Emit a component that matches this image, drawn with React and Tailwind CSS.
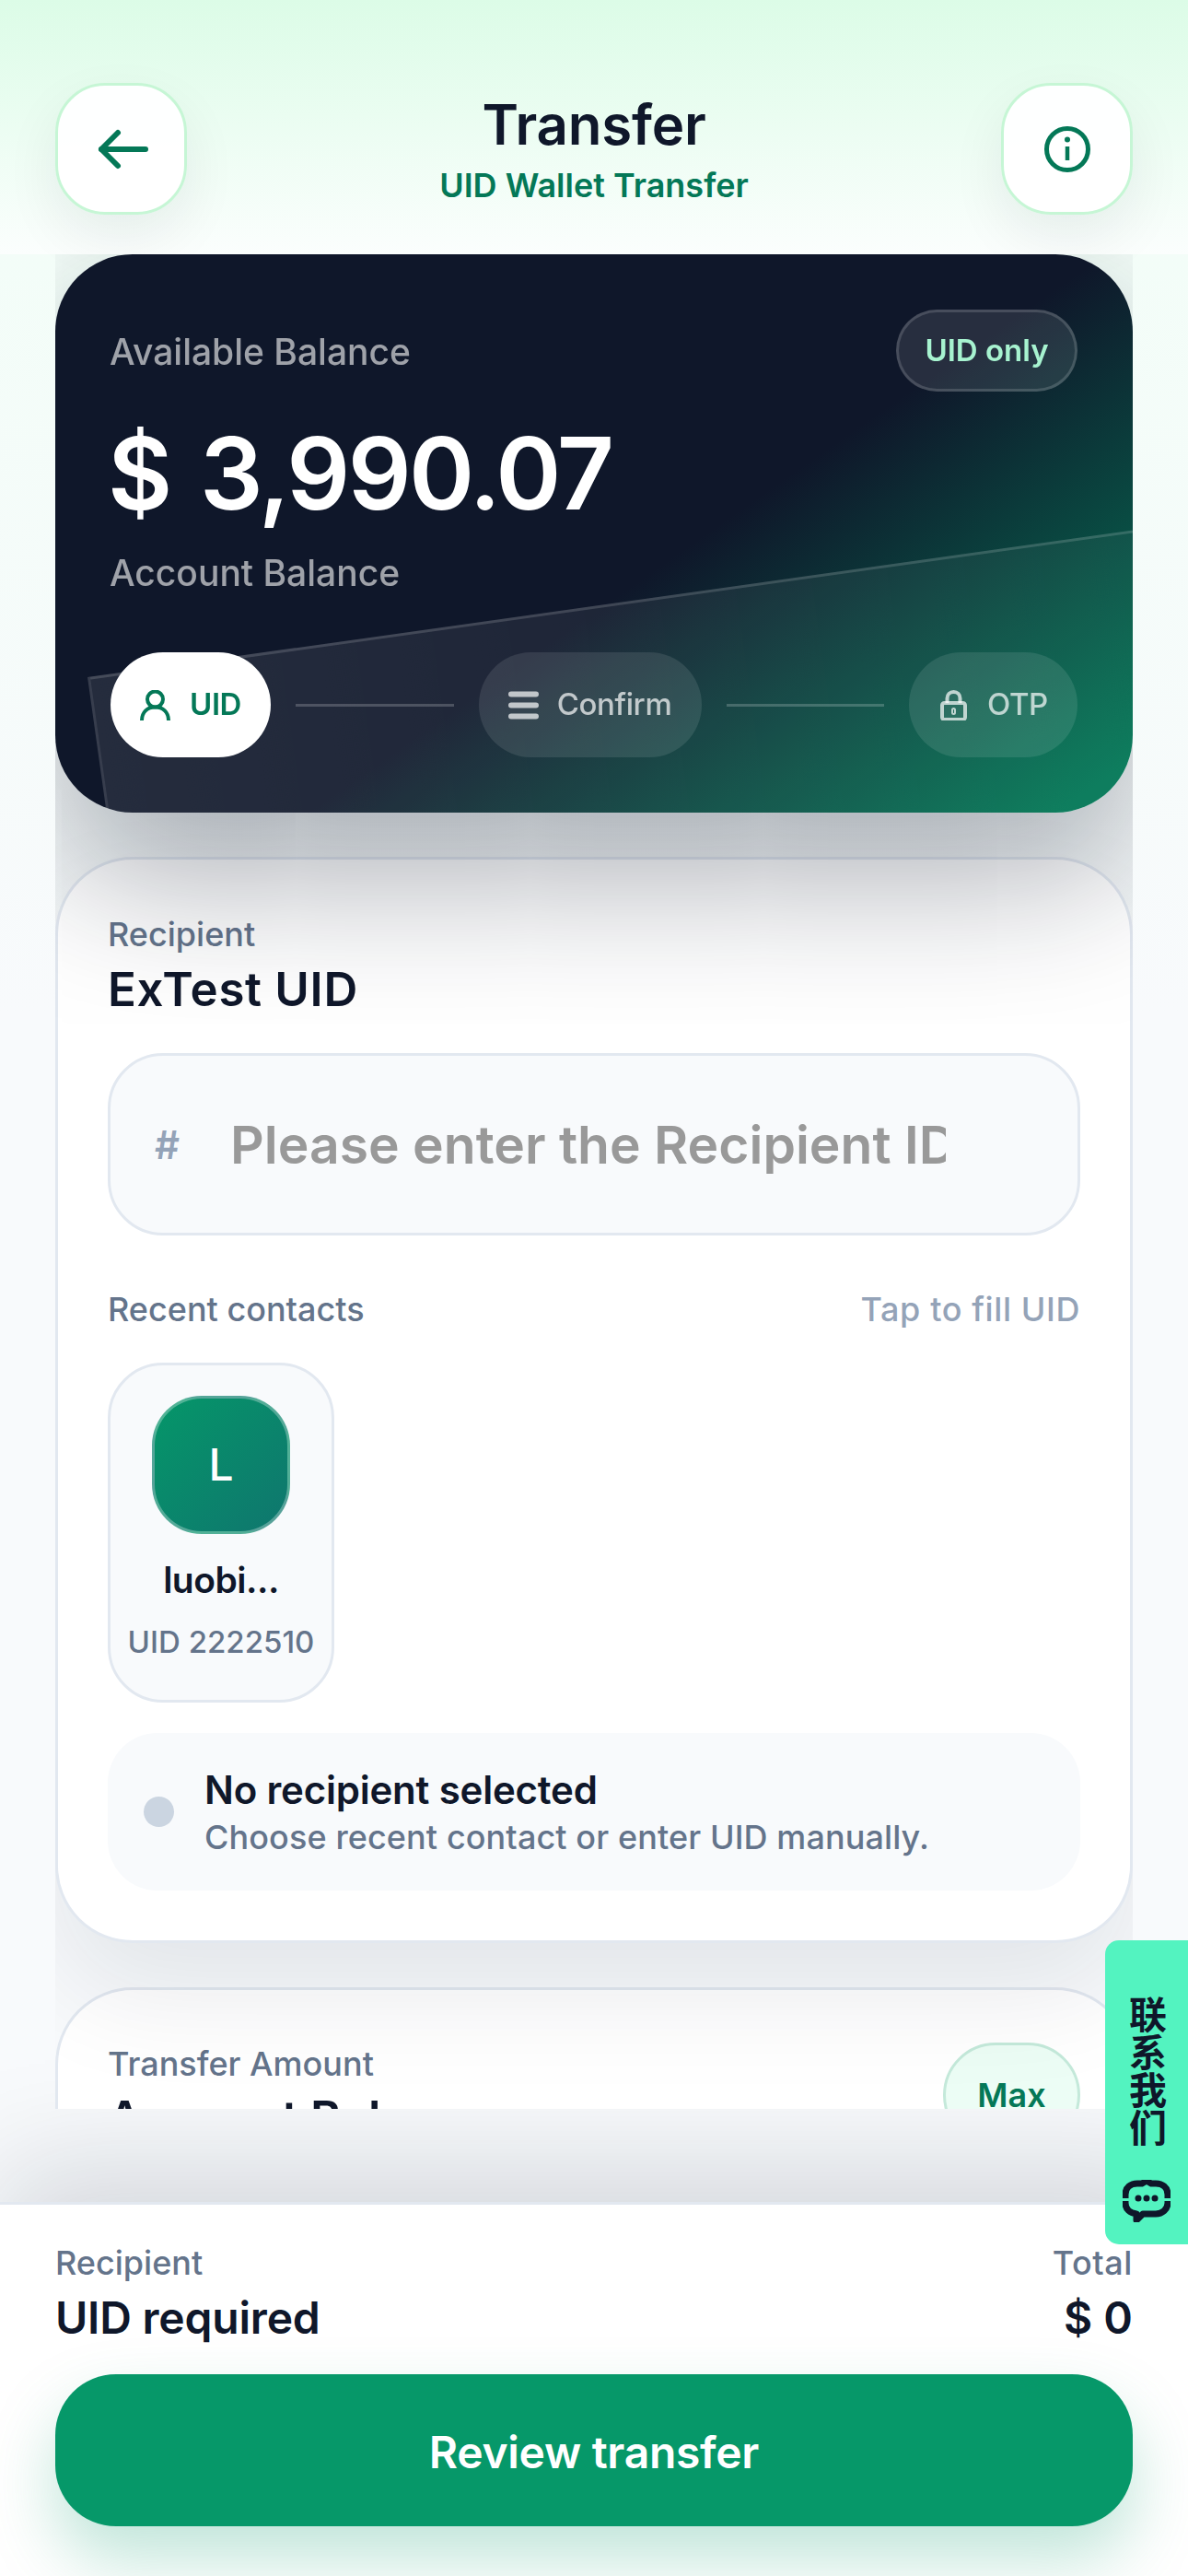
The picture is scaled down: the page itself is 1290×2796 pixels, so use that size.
export default function App() {
  return (
    <div className="relative w-[1290px] h-[2796px] overflow-hidden flex flex-col bg-[linear-gradient(180deg,#f3fdf8_0px,#f3fdf8_276px,#f8fafc_1100px)] font-['Inter',sans-serif] text-[#0f172a]">
      <header className="h-[276px] shrink-0 px-[60px] pt-[90px] flex justify-between items-start bg-[linear-gradient(180deg,#dcfce7_0%,#fbfefd_100%)]">
        <button className="w-[143px] h-[143px] rounded-[54px] border-[3px] border-[#c6f6d5] bg-white/95 flex items-center justify-center shadow-[0_24px_60px_rgba(15,23,42,0.07)]">
          <svg width="60" height="48" viewBox="0 0 60 48" fill="none" stroke="#047857" strokeWidth="6" strokeLinecap="round" strokeLinejoin="round">
            <path d="M26 6 L8 24 L26 42" />
            <path d="M8 24 H56" />
          </svg>
        </button>
        <div className="flex flex-col items-center">
          <div className="text-[60px] leading-[90px] font-semibold tracking-[-0.2px]">Transfer</div>
          <div className="-mt-[3px] text-[36px] leading-[48px] font-semibold text-[#047857]">UID Wallet Transfer</div>
        </div>
        <button className="w-[143px] h-[143px] rounded-[54px] border-[3px] border-[#c6f6d5] bg-white/95 flex items-center justify-center shadow-[0_24px_60px_rgba(15,23,42,0.07)]">
          <svg width="54" height="54" viewBox="0 0 54 54" fill="none" stroke="#047857" strokeWidth="5">
            <circle cx="27" cy="27" r="22.5" />
            <path d="M27 24 V39" strokeWidth="4.5" />
            <circle cx="27" cy="16.5" r="3" fill="#047857" stroke="none" />
          </svg>
        </button>
      </header>

      <main className="relative z-10 mx-[60px] h-[2013px] shrink-0 overflow-hidden">
        <section className="relative z-30 h-[606px] rounded-[84px] shadow-[0_66px_165px_rgba(15,23,42,0.36)] [will-change:transform]">
          <div className="relative h-full rounded-[84px] overflow-hidden px-[60px] pt-[60px] pb-[60px] bg-[linear-gradient(145deg,#0f172a_56%,#047857_96%)]">
            <div className="absolute left-[35px] top-[459px] w-[1500px] h-[500px] origin-top-left -rotate-[8deg] border-t-[3px] border-l-[3px] border-white/15 bg-[linear-gradient(90deg,rgba(255,255,255,0.09),rgba(255,255,255,0.02))]" />
            <div className="relative flex items-center justify-between h-[89px]">
              <span className="mt-[4px] -ml-[1px] text-[39px] font-medium text-white/60">Available Balance</span>
              <span className="h-[89px] w-[197px] rounded-full border-[3px] border-white/15 bg-white/10 flex items-center justify-center text-[33px] font-semibold text-[#a7f3d0]">UID only</span>
            </div>
            <div className="relative mt-[35px] -ml-[3px] text-[108px] leading-[108px] font-semibold tracking-[-0.025em] [word-spacing:8px] text-white">$ 3,990.07</div>
            <div className="relative mt-[30px] -ml-[1px] text-[39px] leading-[48px] font-medium text-white/60">Account Balance</div>
            <div className="relative mt-[62px] flex items-center gap-[27px]">
              <div className="w-[174px] h-[114px] rounded-full bg-white flex items-center justify-center gap-[21px] text-[33px] font-semibold tracking-[-0.5px] text-[#047857] shrink-0">
                <svg width="33" height="33" viewBox="0 0 33 33" fill="none" stroke="#047857" strokeWidth="4">
                  <circle cx="16.5" cy="10" r="8.5" />
                  <path d="M2 33 C2 24 8 18.5 16.5 18.5 C25 18.5 31 24 31 33" />
                </svg>
                UID
              </div>
              <div className="flex-1 h-[3px] bg-white/20" />
              <div className="w-[242px] h-[114px] rounded-full bg-white/10 flex items-center justify-center gap-[20px] text-[33px] font-medium tracking-[-0.4px] text-white/70 shrink-0">
                <svg width="33" height="33" viewBox="0 0 33 33" fill="none" stroke="rgba(255,255,255,0.7)" strokeWidth="6" strokeLinecap="round">
                  <path d="M3 4.5 H30 M3 16.5 H30 M3 28.5 H30" />
                </svg>
                Confirm
              </div>
              <div className="flex-1 h-[3px] bg-white/20" />
              <div className="w-[183px] h-[114px] rounded-full bg-white/10 flex items-center justify-center gap-[20px] text-[33px] font-medium tracking-[-0.4px] text-white/70 shrink-0">
                <svg width="33" height="33" viewBox="0 0 33 33" fill="none" stroke="rgba(255,255,255,0.7)" strokeWidth="4">
                  <rect x="4" y="14" width="25" height="18" rx="2.5" />
                  <path d="M9.5 14 V9 C9.5 5 12.5 2 16.5 2 C20.5 2 23.5 5 23.5 9 V14" />
                  <rect x="15" y="20" width="3" height="6" rx="1.5" strokeWidth="2" />
                </svg>
                OTP
              </div>
            </div>
          </div>
        </section>

        <section className="relative z-20 mt-[48px] rounded-[84px] border-[3px] border-[#e2e8f0] bg-white px-[54px] pt-[56px] pb-[54px] shadow-[0_54px_120px_rgba(15,23,42,0.09)]">
          <div className="text-[36px] leading-[50px] font-medium text-[#64748b]">Recipient</div>
          <div className="mt-[5px] text-[51px] leading-[60px] font-semibold tracking-[0.7px]">ExTest UID</div>
          <div className="mt-[39px] h-[198px] rounded-[60px] border-[3px] border-[#e2e8f0] bg-[#f8fafc] pl-[48px] flex items-center">
            <span className="w-[82px] shrink-0 text-[42px] font-semibold text-[#94a3b8]">#</span>
            <input
              readOnly
              placeholder="Please enter the Recipient ID"
              className="mt-[2px] w-[777px] bg-transparent outline-none text-[57px] font-semibold placeholder:text-[#999999]"
            />
          </div>
          <div className="mt-[56px] flex items-center justify-between text-[36px] leading-[48px] font-medium">
            <span className="text-[#64748b]">Recent contacts</span>
            <span className="text-[#94a3b8] tracking-[0.6px]">Tap to fill UID</span>
          </div>
          <div className="mt-[34px] w-[246px] h-[369px] rounded-[60px] border-[3px] border-[#e2e8f0] bg-[#f8fafc] pt-[33px] flex flex-col items-center">
            <div className="w-[150px] h-[150px] shrink-0 rounded-[54px] border-[3px] border-white/30 bg-[linear-gradient(135deg,#059669,#0f766e)] flex items-center justify-center text-[48px] font-medium text-white">L</div>
            <div className="mt-[26px] text-[39px] leading-[48px] font-semibold tracking-[-0.5px]">luobi...</div>
            <div className="mt-[22px] text-[33px] leading-[42px] font-medium text-[#64748b] whitespace-nowrap">UID 2222510</div>
          </div>
          <div className="mt-[33px] h-[171px] rounded-[54px] bg-[#f8fafc] pl-[39px] flex items-center gap-[33px]">
            <div className="w-[33px] h-[33px] rounded-full bg-[#cbd5e1] shrink-0" />
            <div>
              <div className="text-[42px] leading-[54px] font-semibold tracking-[-0.2px]">No recipient selected</div>
              <div className="text-[36px] leading-[48px] font-medium tracking-[0.1px] text-[#64748b]">Choose recent contact or enter UID manually.</div>
            </div>
          </div>
        </section>

        <section className="relative z-10 mt-[48px] h-[400px] rounded-[84px] border-[3px] border-[#e2e8f0] bg-white px-[54px] pt-[57px] flex justify-between items-start">
          <div>
            <div className="-mt-[2px] text-[36px] leading-[50px] font-medium text-[#64748b]">Transfer Amount</div>
            <div className="mt-[4px] text-[51px] leading-[60px] font-semibold">Account Balance</div>
          </div>
          <button className="w-[149px] h-[114px] rounded-full border-[3px] border-[#c4e9da] bg-[#ecfdf5] text-[36px] font-semibold text-[#047857]">Max</button>
        </section>
      </main>

      <footer className="relative mt-[101px] flex-1 border-t-[3px] border-[#e2e8f0] bg-white px-[60px] pt-[39px] shadow-[0_-36px_120px_rgba(15,23,42,0.15)]">
        <div className="flex justify-between">
          <div>
            <div className="text-[36px] leading-[48px] font-medium text-[#64748b]">Recipient</div>
            <div className="mt-[6px] text-[48px] leading-[60px] font-semibold tracking-[-0.2px]">UID required</div>
          </div>
          <div className="text-right">
            <div className="text-[36px] leading-[48px] font-medium tracking-[0.6px] text-[#64748b]">Total</div>
            <div className="mt-[6px] text-[48px] leading-[60px] font-semibold">$ 0</div>
          </div>
        </div>
        <button className="mt-[31px] w-full h-[165px] pt-[5px] rounded-[66px] bg-[#069869] text-[48px] font-semibold tracking-[-0.3px] text-white shadow-[0_36px_72px_rgba(5,150,105,0.25)]">Review transfer</button>
      </footer>

      <div className="absolute z-50 right-0 top-[2106px] w-[90px] h-[330px] rounded-l-[15px] bg-[#53f3c0] flex flex-col items-center pt-[60px]">
        <span className="ml-[2px] [writing-mode:vertical-rl] text-[41px] leading-[41px] font-semibold font-['Noto_Sans_CJK_SC',sans-serif] text-[#0f172a]">联系我们</span>
        <svg className="mt-[36px]" width="52" height="46" viewBox="0 0 52 46" fill="none">
          <path d="M3 20 V16 C3 8 9 4 16 4 H21 L26 1 L31 4 H36 C43 4 49 8 49 16 V20 M49 23 V25 C49 32 43 37 36 37 H22 L15 44 V37 C8 36 3 32 3 25 V23" stroke="#0f172a" strokeWidth="7" strokeLinejoin="round" />
          <circle cx="17" cy="20" r="3.5" fill="#0f172a" />
          <circle cx="26" cy="20" r="3.5" fill="#0f172a" />
          <circle cx="35" cy="20" r="3.5" fill="#0f172a" />
        </svg>
      </div>
    </div>
  );
}
